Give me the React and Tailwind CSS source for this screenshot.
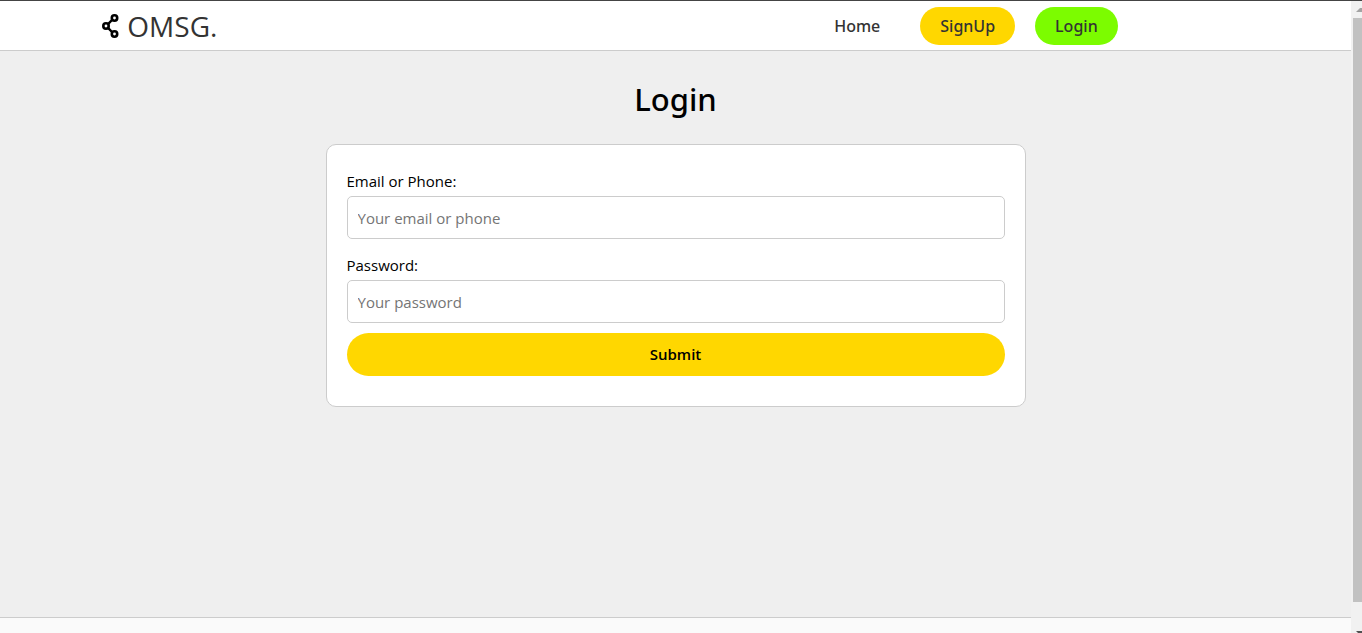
function ShareIcon() {
  return (
    <svg viewBox="0 0 18 26" className="h-[26px] w-[18px]" fill="none" stroke="black" strokeWidth="2.6" aria-hidden="true">
      <path d="M7 11.2 11.5 6.5M7 14.8l4.5 4.7" strokeWidth="2.4" />
      <circle cx="5" cy="13" r="2.7" />
      <circle cx="13.5" cy="5" r="2.7" />
      <circle cx="13.5" cy="21" r="2.7" />
    </svg>
  );
}

function Header() {
  return (
    <header className="border-y border-t-[#444444] border-b-[#cccccc] bg-white text-[#333333]">
      <div className="mx-auto flex h-[49px] w-[85%] items-center justify-between">
        <a href="#home" className="flex items-center gap-2 text-[28px] leading-9">
          <ShareIcon />
          OMSG.
        </a>
        <nav className="mr-[132px] flex items-center gap-5 font-['Noto_Sans',sans-serif] text-base font-medium">
          <a href="#home" className="px-5 leading-[38px]">Home</a>
          <a href="#signup" className="rounded-full bg-[#ffd700] px-5 leading-[38px]">SignUp</a>
          <a href="#login" className="rounded-full bg-[#7cfc00] px-5 leading-[38px]">Login</a>
        </nav>
      </div>
    </header>
  );
}

function Field({ id, label, type, placeholder }) {
  return (
    <div className="mb-[10px]">
      <label htmlFor={id} className="block pt-0.5 text-[15px] leading-[29px]">{label}</label>
      <input
        id={id}
        type={type}
        placeholder={placeholder}
        className="block h-[43px] w-full rounded-[5px] border border-[#cccccc] bg-white px-[10px] text-[15px] placeholder:text-[#757575]"
      />
    </div>
  );
}

function Scrollbar() {
  return (
    <div aria-hidden="true" className="flex w-[11px] shrink-0 flex-col items-end overflow-hidden border-t border-t-[#444444] bg-[#f1f1f1]">
      <svg viewBox="0 0 9 17" className="h-[17px] w-[9px] shrink-0">
        <path d="M3 11h6V7H7z" fill="#a3a3a3" />
      </svg>
      <div className="w-[9px] flex-1 bg-[#c1c1c1]" />
      <svg viewBox="0 0 9 31" className="h-[31px] w-[9px] shrink-0">
        <path d="M3 29h6v2H5z" fill="#505050" />
      </svg>
    </div>
  );
}

export default function App() {
  return (
    <div className="flex min-h-screen bg-[#efefef] font-['Open_Sans','Noto_Sans',sans-serif] text-black">
      <div className="flex min-w-0 flex-1 flex-col">
        <Header />
        <main className="flex-1 px-5 pt-[26px]">
          <h1 className="mb-[23px] text-center font-['Noto_Sans',sans-serif] text-[31px] font-medium leading-[44px]">Login</h1>
          <form className="mx-auto max-w-[700px] rounded-[10px] border border-[#cccccc] bg-white p-5">
            <Field id="account" label="Email or Phone:" type="text" placeholder="Your email or phone" />
            <Field id="password" label="Password:" type="password" placeholder="Your password" />
            <button type="submit" className="mb-[10px] block h-[43px] w-full rounded-full bg-[#ffd700] text-[15px] font-semibold">
              Submit
            </button>
          </form>
        </main>
        <footer className="h-4 border-t border-[#cccccc] bg-[#fafafa]" />
      </div>
      <Scrollbar />
    </div>
  );
}
